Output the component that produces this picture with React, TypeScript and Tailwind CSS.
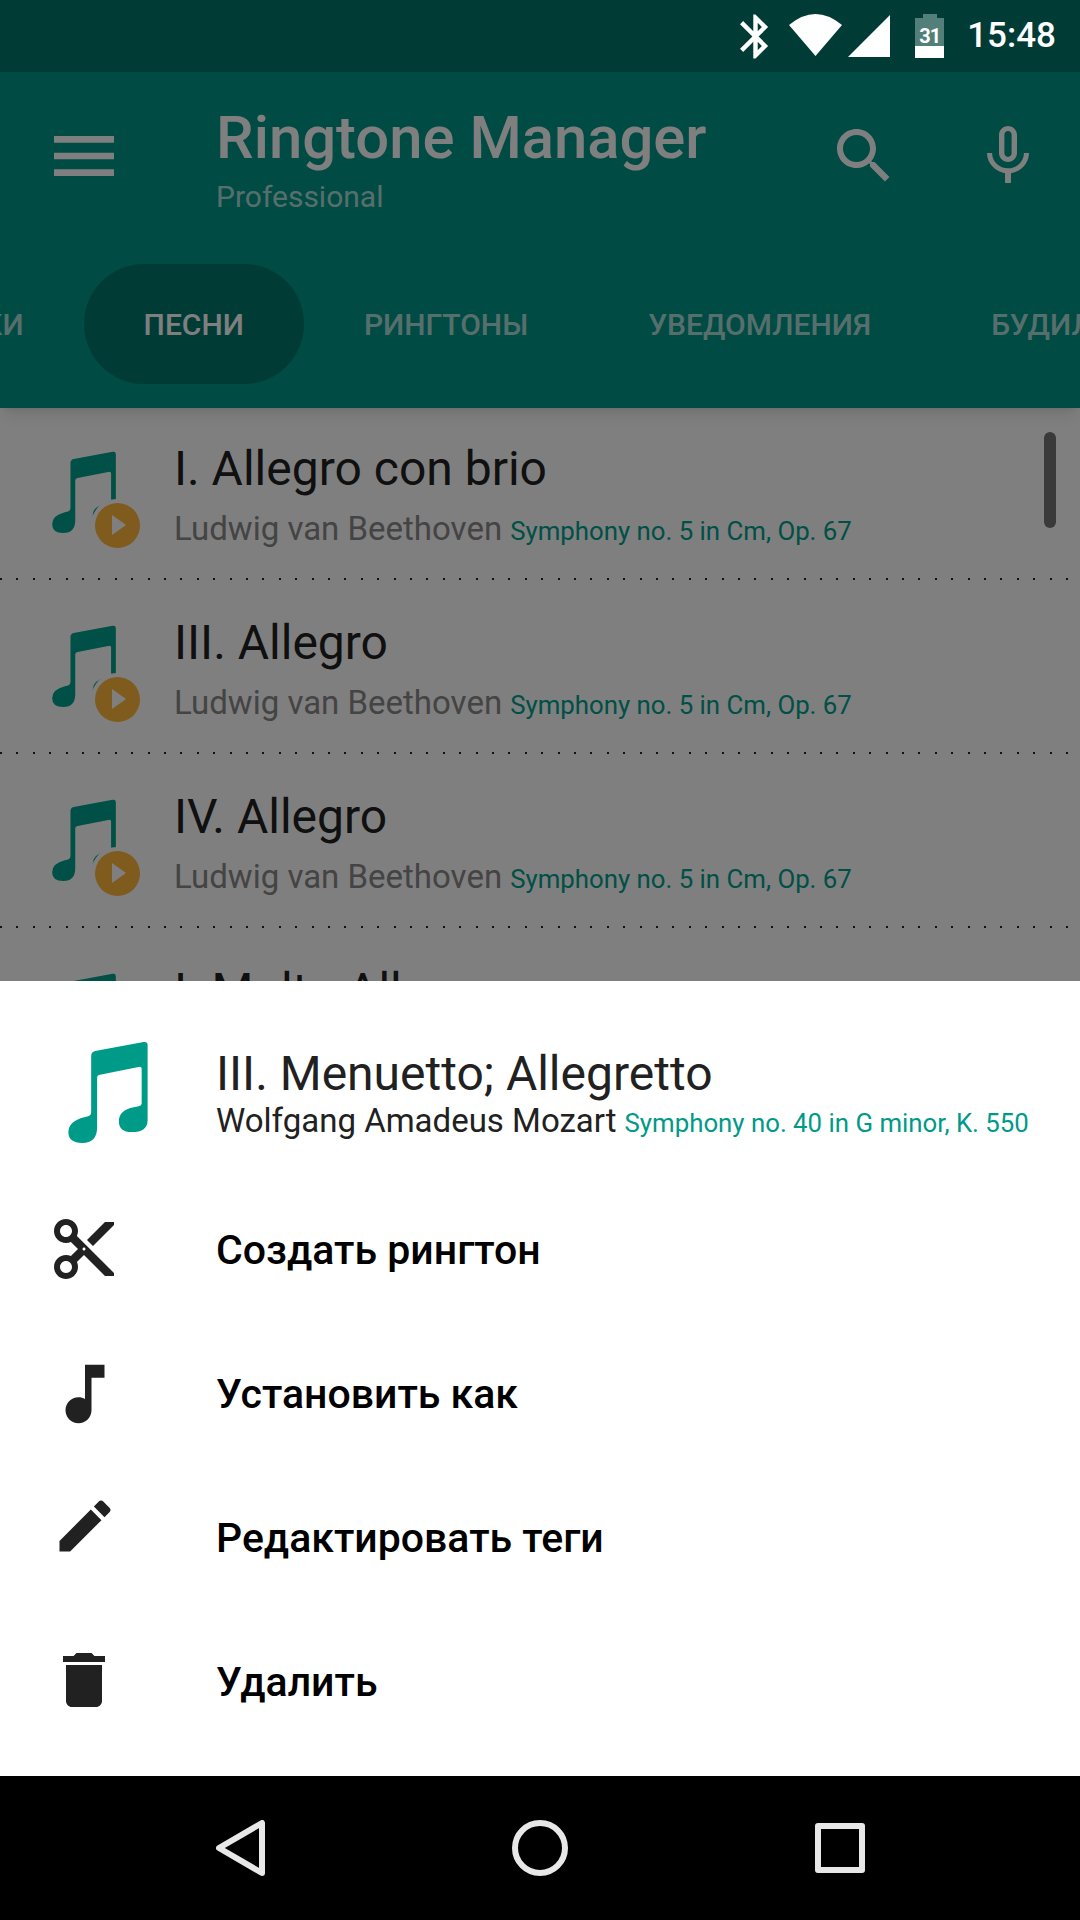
const tracks = [
  { title: "I. Allegro con brio", artist: "Ludwig van Beethoven", album: "Symphony no. 5 in Cm, Op. 67" },
  { title: "III. Allegro", artist: "Ludwig van Beethoven", album: "Symphony no. 5 in Cm, Op. 67" },
  { title: "IV. Allegro", artist: "Ludwig van Beethoven", album: "Symphony no. 5 in Cm, Op. 67" },
  { title: "I. Molto Allegro", artist: "Wolfgang Amadeus Mozart", album: "Symphony no. 40 in G minor, K. 550" },
];

const tabs = ["ЗАГРУЗКИ", "ПЕСНИ", "РИНГТОНЫ", "УВЕДОМЛЕНИЯ", "БУДИЛЬНИКИ"];

const NOTE =
  "M23 14Q23 10 27 9L76 0Q80 -.5 80 3V79Q80 91 64 91Q51 91 51 80Q51 69 66 66L71 65Q74 64 74 62V27Q74 25 72 25L32 33Q29 33.500 29 36V86Q29 102 14 102Q0 102 0 91Q0 80 16 76L20 75Q23 74 23 71Z";

function Glyph({ d, className }: { d: string; className: string }) {
  return (
    <svg viewBox="0 0 24 24" fill="currentColor" className={className}>
      <path d={d} />
    </svg>
  );
}

function TrackRow({ title, artist, album }: { title: string; artist: string; album: string }) {
  return (
    <div className="h-[174px] shrink-0 flex flex-col relative">
      <div className="flex-1 flex pl-[52px]">
        <div className="relative w-[64px] h-[82px] mt-[43px] shrink-0">
          <svg viewBox="0 -1 80 103" className="w-[64px] h-[82px] text-[#00a08e]" fill="currentColor">
            <path d={NOTE} />
          </svg>
          <div className="absolute left-[39px] top-[48px] w-[52px] h-[52px] rounded-full bg-white flex items-center justify-center">
            <div className="w-[45px] h-[45px] rounded-full bg-[#ffb63c] flex items-center justify-center">
              <svg viewBox="0 0 14 20" className="w-[14px] h-[20px] ml-[3px]" fill="#fff">
                <path d="M0 0L14 10L0 20Z" />
              </svg>
            </div>
          </div>
        </div>
        <div className="ml-[58px] pt-[31px]">
          <div className="text-[48px] leading-[60px] text-[#212121] whitespace-nowrap">{title}</div>
          <div className="mt-[8px] flex items-baseline gap-[8px] whitespace-nowrap">
            <span className="text-[33px] leading-[44px] text-[#888888]">{artist}</span>
            <span className="text-[25.800px] leading-[44px] text-[#00a08e]">{album}</span>
          </div>
        </div>
      </div>
      <div className="h-[2px] mb-[2px] bg-[repeating-linear-gradient(90deg,#222_0,#222_2px,transparent_2px,transparent_16.4px)]" />
    </div>
  );
}

function MenuRow({ d, size, label }: { d: string; size: string; label: string }) {
  return (
    <div className="h-[144px] flex items-center">
      <div className="w-[168px] flex justify-center text-[#212121]">
        <Glyph d={d} className={size} />
      </div>
      <div className="ml-[48px] pt-[2px] text-[41px] font-medium text-black">{label}</div>
    </div>
  );
}

export default function App() {
  return (
    <div className="w-[1080px] h-[1920px] flex flex-col overflow-hidden bg-black font-['Roboto',sans-serif]">
      {/* status bar */}
      <div className="h-[72px] shrink-0 bg-[#003c35] flex items-start justify-end pr-[24px] text-white">
        <svg viewBox="0 0 24 24" fill="currentColor" className="w-[53px] h-[53px] mt-[10px] -mb-[10px]">
          <path d="M17.71 7.71L12 2h-1v7.590L6.410 5 5 6.410 10.590 12 5 17.590 6.410 19 11 14.410V22h1l5.710-5.710-4.300-4.290 4.300-4.290zM13 5.830l1.880 1.880L13 9.590V5.830zm1.880 10.460L13 18.170v-3.760l1.880 1.880z" />
        </svg>
        <svg viewBox="0 0 53 42" fill="currentColor" className="w-[53px] h-[42px] ml-[7px] mt-[14px]">
          <path d="M0 11Q26.500 -11 53 11L26.500 42Z" />
        </svg>
        <svg viewBox="0 0 42 42" fill="currentColor" className="w-[42px] h-[42px] ml-[6px] mt-[15px]">
          <path d="M0 42L42 0V42Z" />
        </svg>
        <div className="relative w-[29px] h-[44px] ml-[25px] mt-[14px]">
          <div className="mx-auto w-[14px] h-[4px] bg-[#527f79]" />
          <div className="h-[28px] bg-[#527f79]" />
          <div className="h-[12px] bg-white" />
          <span className="absolute inset-x-0 top-[12px] text-center text-[20px] leading-[20px] font-bold tracking-[-1px]">
            31
          </span>
        </div>
        <div className="ml-[23px] mt-[14px] text-[35px] leading-[44px] font-medium">15:48</div>
      </div>

      <div className="relative flex-1 flex flex-col bg-white overflow-hidden">
        {/* app bar */}
        <div className="h-[336px] shrink-0 bg-[#009688] text-white shadow-lg relative z-10 flex flex-col">
          <div className="flex h-[192px] items-start pt-[32px]">
            <Glyph
              d="M3 18h18v-2H3v2zm0-5h18v-2H3v2zm0-5h18V6H3v2z"
              className="w-[80px] h-[80px] ml-[44px] mt-[12px] shrink-0"
            />
            <div className="ml-[92px] flex-1">
              <div className="text-[59.800px] leading-[68px] font-medium whitespace-nowrap">Ringtone Manager</div>
              <div className="text-[30px] leading-[40px] text-white/70 mt-[5px]">Professional</div>
            </div>
            <Glyph
              d="M15.500 14h-.790l-.280-.270C15.410 12.590 16 11.110 16 9.500 16 5.910 13.090 3 9.500 3S3 5.910 3 9.500 5.910 16 9.500 16c1.610 0 3.090-.590 4.230-1.570l.270.280v.790l5 4.990L20.490 19l-4.990-5zm-6 0C7.010 14 5 11.990 5 9.500S7.010 5 9.500 5 14 7.010 14 9.500 11.990 14 9.500 14z"
              className="w-[72px] h-[72px] mt-[16px] shrink-0"
            />
            <Glyph
              d="M12 14c1.660 0 2.990-1.340 2.990-3L15 5c0-1.660-1.340-3-3-3S9 3.340 9 5v6c0 1.660 1.340 3 3 3zm-1.200-9.100c0-.660.540-1.200 1.200-1.200.660 0 1.200.540 1.200 1.200l-.010 6.200c0 .660-.530 1.200-1.190 1.200-.660 0-1.200-.540-1.200-1.200V4.900zm6.500 6.100c0 3-2.540 5.100-5.300 5.100S6.700 14 6.700 11H5c0 3.410 2.720 6.230 6 6.720V21h2v-3.280c3.280-.480 6-3.300 6-6.720h-1.700z"
              className="w-[72px] h-[72px] mt-[16px] ml-[72px] mr-[36px] shrink-0"
            />
          </div>
          <div className="flex h-[120px] ml-[-188px] whitespace-nowrap">
            {tabs.map((t) => (
              <div
                key={t}
                className={
                  t === "ПЕСНИ"
                    ? "h-[120px] px-[60px] rounded-full bg-[#00796b] flex items-center text-[30px] font-medium text-white"
                    : "h-[120px] px-[60px] flex items-center text-[30px] font-medium text-white/70"
                }
              >
                {t}
              </div>
            ))}
          </div>
        </div>

        {/* list */}
        <div className="relative flex-1 flex flex-col overflow-hidden">
          {tracks.map((t) => (
            <TrackRow key={t.title} {...t} />
          ))}
          <div className="absolute right-[24px] top-[24px] w-[12px] h-[96px] rounded-full bg-[#757575]" />
        </div>

        {/* scrim */}
        <div className="absolute inset-0 z-20 bg-black/50" />

        {/* bottom sheet */}
        <div className="absolute z-30 inset-x-0 bottom-0 h-[795px] bg-white">
          <div className="h-[197px] flex items-start pl-[68px] pt-[60px]">
            <svg viewBox="0 -1 80 103" className="w-[80px] h-[102px] text-[#009a88] shrink-0" fill="currentColor">
              <path d={NOTE} />
            </svg>
            <div className="ml-[68px] mt-[5px]">
              <div className="text-[48px] leading-[56px] text-[#212121] whitespace-nowrap">
                III. Menuetto; Allegretto
              </div>
              <div className="flex items-baseline gap-[8px] whitespace-nowrap">
                <span className="text-[33px] leading-[38px] text-[#212121]">Wolfgang Amadeus Mozart</span>
                <span className="text-[25.800px] leading-[38px] text-[#009a88]">Symphony no. 40 in G minor, K. 550</span>
              </div>
            </div>
          </div>
          <MenuRow
            size="w-[72px] h-[72px] mb-[2px]"
            label="Создать рингтон"
            d="M9.640 7.640c.230-.500.360-1.050.360-1.640 0-2.210-1.790-4-4-4S2 3.790 2 6s1.790 4 4 4c.590 0 1.140-.130 1.640-.360L10 12l-2.360 2.360C7.140 14.130 6.590 14 6 14c-2.210 0-4 1.790-4 4s1.790 4 4 4 4-1.790 4-4c0-.590-.130-1.140-.360-1.640L12 14l7 7h3v-1L9.640 7.640zM6 8c-1.100 0-2-.890-2-2s.900-2 2-2 2 .890 2 2-.900 2-2 2zm0 12c-1.100 0-2-.890-2-2s.900-2 2-2 2 .890 2 2-.900 2-2 2zm6-7.500c-.280 0-.500-.220-.500-.500s.220-.500.500-.500.500.220.500.500-.220.500-.500.500zM19 3l-6 6 2 2 7-7V3z"
          />
          <MenuRow
            size="w-[78px] h-[78px] ml-[2px]"
            label="Установить как"
            d="M12 3v10.550c-.590-.340-1.270-.550-2-.550-2.210 0-4 1.790-4 4s1.790 4 4 4 4-1.790 4-4V7h4V3h-6z"
          />
          <MenuRow
            size="w-[68px] h-[68px] ml-[2px] mb-[24px]"
            label="Редактировать теги"
            d="M3 17.250V21h3.750L17.810 9.940l-3.750-3.750L3 17.250zM20.710 7.040c.390-.390.390-1.020 0-1.410l-2.340-2.340c-.390-.390-1.020-.390-1.410 0l-1.830 1.830 3.750 3.750 1.830-1.830z"
          />
          <MenuRow
            size="w-[72px] h-[72px] mb-[4px]"
            label="Удалить"
            d="M6 19c0 1.100.900 2 2 2h8c1.100 0 2-.900 2-2V7H6v12zM19 4h-3.500l-1-1h-5l-1 1H5v2h14V4z"
          />
        </div>
      </div>

      {/* nav bar */}
      <div className="h-[144px] shrink-0 bg-black flex items-center text-[#e8e8e8]">
        <svg viewBox="0 0 50 56" className="w-[50px] h-[56px] ml-[216px]" fill="none" stroke="currentColor" strokeWidth="6" strokeLinejoin="round">
          <path d="M46 3V53L3 28Z" />
        </svg>
        <svg viewBox="0 0 56 56" className="w-[56px] h-[56px] ml-[246px]" fill="none" stroke="currentColor" strokeWidth="6">
          <circle cx="28" cy="28" r="25" />
        </svg>
        <div className="w-[50px] h-[50px] ml-[247px] border-[6px] border-current rounded-[3px]" />
      </div>
    </div>
  );
}
